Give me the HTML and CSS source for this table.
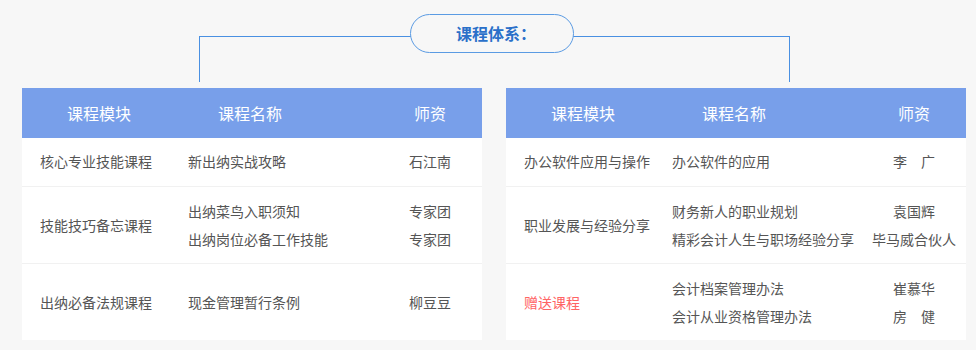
FILE: index.html
```html
<!DOCTYPE html>
<html lang="zh-CN">
<head>
<meta charset="utf-8">
<title>课程体系</title>
<link rel="stylesheet" href="styles.css">
</head>
<body>
<div class="page">
  <div class="top">
    <div class="bracket">
      <div class="pill">课程体系：</div>
    </div>
  </div>
  <div class="tables">
    <div class="table">
      <div class="row head">
        <div class="c1">课程模块</div>
        <div class="c2">课程名称</div>
        <div class="c3">师资</div>
      </div>
      <div class="row r1">
        <div class="c1">核心专业技能课程</div>
        <div class="c2"><p>新出纳实战攻略</p></div>
        <div class="c3"><p>石江南</p></div>
      </div>
      <div class="row r2">
        <div class="c1">技能技巧备忘课程</div>
        <div class="c2"><p>出纳菜鸟入职须知</p><p>出纳岗位必备工作技能</p></div>
        <div class="c3"><p>专家团</p><p>专家团</p></div>
      </div>
      <div class="row r3">
        <div class="c1">出纳必备法规课程</div>
        <div class="c2"><p>现金管理暂行条例</p></div>
        <div class="c3"><p>柳豆豆</p></div>
      </div>
    </div>
    <div class="table">
      <div class="row head">
        <div class="c1">课程模块</div>
        <div class="c2">课程名称</div>
        <div class="c3">师资</div>
      </div>
      <div class="row r1">
        <div class="c1">办公软件应用与操作</div>
        <div class="c2"><p>办公软件的应用</p></div>
        <div class="c3"><p>李　广</p></div>
      </div>
      <div class="row r2">
        <div class="c1">职业发展与经验分享</div>
        <div class="c2"><p>财务新人的职业规划</p><p>精彩会计人生与职场经验分享</p></div>
        <div class="c3"><p>袁国辉</p><p>毕马威合伙人</p></div>
      </div>
      <div class="row r3">
        <div class="c1 gift">赠送课程</div>
        <div class="c2"><p>会计档案管理办法</p><p>会计从业资格管理办法</p></div>
        <div class="c3"><p>崔慕华</p><p>房　健</p></div>
      </div>
    </div>
  </div>
</div>
</body>
</html>
```

FILE: styles.css
```css
* { box-sizing: border-box; }
html, body {
  margin: 0;
  padding: 0;
  background: #f7f7f7;
}
body {
  font-family: "Microsoft YaHei", "Noto Sans CJK SC", "Noto Sans", sans-serif;
  color: #555;
  width: 976px;
  height: 350px;
  overflow: hidden;
}
.top {
  height: 88px;
  padding-top: 36px;
}
.bracket {
  position: relative;
  margin-left: 199px;
  width: 591px;
  height: 46px;
  border: 1px solid #4a90e2;
  border-bottom: none;
}
.pill {
  position: absolute;
  left: 210px;
  top: -23px;
  width: 164px;
  height: 39px;
  border: 1px solid #5b9be3;
  border-radius: 20px;
  background: #f7f7f7;
  color: #2a70c9;
  font-weight: bold;
  font-size: 16px;
  line-height: 37px;
  text-align: center;
  padding-left: 8px;
}
.tables {
  display: flex;
  gap: 24px;
  padding-left: 22px;
}
.table {
  width: 460px;
  background: #fff;
}
.row {
  display: grid;
  grid-template-columns: 154px 202px 104px;
  align-items: center;
  font-size: 14px;
  border-bottom: 1px solid #f1f1f1;
}
.row p { margin: 0; line-height: 28px; }
.head {
  height: 50px;
  background: #789fea;
  color: #fff;
  font-size: 16px;
  border-bottom: none;
}
.head .c1 { text-align: center; padding-left: 0; }
.head .c2 { padding-left: 42px; }
.head .c3 { text-align: center; }
.r1 { height: 49px; }
.r2 { height: 77px; }
.r3 { height: 76px; border-bottom: none; }
.r1 p, .r1 .c1 { position: relative; top: -1px; }
.c1 { padding-left: 18px; }
.c2 { padding-left: 12px; white-space: nowrap; }
.c3 { text-align: center; white-space: nowrap; }
.gift { color: #ff6464; }
```
